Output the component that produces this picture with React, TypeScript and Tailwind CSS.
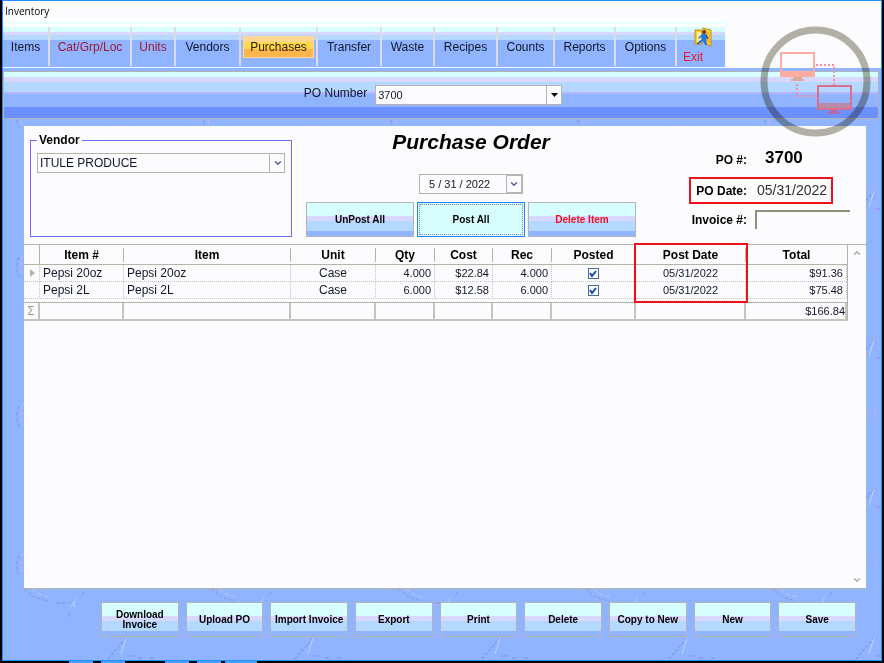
import { ChevronDown, ChevronUp } from "lucide-react";
import clsx from "clsx";

const menuItems = [
  { label: "Items", width: "w-[47px]" },
  { label: "Cat/Grp/Loc", width: "w-[82px]", red: true },
  { label: "Units", width: "w-[44px]", red: true },
  { label: "Vendors", width: "w-[65px]" },
  { label: "Purchases", width: "w-[77px]", active: true },
  { label: "Transfer", width: "w-[64px]" },
  { label: "Waste", width: "w-[53px]" },
  { label: "Recipes", width: "w-[63px]" },
  { label: "Counts", width: "w-[57px]" },
  { label: "Reports", width: "w-[61px]" },
  { label: "Options", width: "w-[61px]" },
];

const columns = [
  { label: "Item #", width: "w-[84px]" },
  { label: "Item", width: "" },
  { label: "Unit", width: "w-[85px]" },
  { label: "Qty", width: "w-[59px]" },
  { label: "Cost", width: "w-[58px]" },
  { label: "Rec", width: "w-[59px]" },
  { label: "Posted", width: "w-[84px]" },
  { label: "Post Date", width: "w-[110px]" },
  { label: "Total", width: "w-[101px]" },
];

const rows = [
  { item: "Pepsi 20oz", unit: "Case", qty: "4.000", cost: "$22.84", date: "05/31/2022", total: "$91.36" },
  { item: "Pepsi 2L", unit: "Case", qty: "6.000", cost: "$12.58", date: "05/31/2022", total: "$75.48" },
];

const actions = [
  "Download Invoice",
  "Upload PO",
  "Import Invoice",
  "Export",
  "Print",
  "Delete",
  "Copy to New",
  "New",
  "Save",
];

const buttonBands =
  "bg-[linear-gradient(#d8ffff_0_38%,#d8d8ff_38%_56%,#b4d8ff_56%_86%,#90b4ff_86%)]";

const Backdrop = () => (
  <svg className="pointer-events-none absolute inset-0 h-full w-full" aria-hidden="true">
    <defs>
      <pattern id="sketch" x="21" y="588" width="187" height="149" patternUnits="userSpaceOnUse">
        <g fill="none" strokeWidth="1">
          <path d="M1 0c6 7 13 10 23 12M60 3l-3 5" stroke="#8094d0" strokeDasharray="3 2" />
          <path d="M8 0c6 5 11 7 17 8M53 8l-4 6" stroke="#b9c6ff" strokeDasharray="5 2" />
          <path d="M32 14h15M45 24v5" stroke="#8094d0" strokeDasharray="4 2" />
          <path d="M47 18l5-6M49 13l2 5" stroke="#b4d8ff" />
          <path d="M84 70l18-21" stroke="#7488c0" strokeDasharray="3 2" />
          <path d="M102 49l-5 16" stroke="#c3d2ff" />
          <path d="M103 67h7" stroke="#9c86ff" />
          <path d="M114 69h4M126 69h4M90 96h3" stroke="#8094d0" />
          <path d="M182 115c-3 6-3 14 0 20" stroke="#8094d0" strokeDasharray="4 2" />
          <path d="M186 113c-3 7-3 14 0 21" stroke="#c8b4ff" strokeDasharray="5 2" />
          <path d="M96 117c-3 4-2 9 1 11M103 118v7" stroke="#b4b4e8" />
        </g>
      </pattern>
    </defs>
    <rect width="100%" height="100%" fill="url(#sketch)" />
  </svg>
);

const ExitIcon = () => (
  <svg width="19" height="20" viewBox="0 0 19 20" aria-hidden="true">
    <path d="M1 3h7v14H1z" fill="#ffc928" stroke="#c88a18" />
    <path d="M3 5h4v10H3z" fill="#fff2a8" />
    <path d="M8 1l9 2v16l-5-2V4z" fill="#ffd52e" stroke="#c88a18" />
    <path d="M13 5l3 1v10l-3-1z" fill="#ffb81c" />
    <circle cx="10" cy="5" r="2" fill="#6b3d1d" />
    <path d="M8 7l4 0 2 4-2 1 1 6-2 0-2-4-4 3-1-2 4-3-1-2-2 2-1-1z" fill="#2478dc" />
    <path d="M12 8l2 3-1 1M5 17l-2-1" stroke="#174a94" fill="none" />
  </svg>
);

// The ring tints whatever it crosses, the monitors keep their own colours.
const NetworkBadge = () => (
  <>
    <svg
      className="pointer-events-none absolute top-[25px] right-[10px] z-10 mix-blend-multiply"
      width="111"
      height="111"
      viewBox="0 0 111 111"
      aria-hidden="true"
    >
      <circle cx="55.500" cy="55.500" r="51.500" fill="none" stroke="#b4b1a5" strokeWidth="7" />
    </svg>
    <svg
      className="pointer-events-none absolute top-[25px] right-[10px] z-10"
      width="111"
      height="111"
      viewBox="0 0 111 111"
      aria-hidden="true"
    >
      <path fillRule="evenodd" d="M20 26h35v25H20zM22 28v17h31V28z" fill="#ffaca0" />
      <path d="M33 51h9v2h2v2H31v-2h2z" fill="#e0a898" />
      <path fillRule="evenodd" d="M57 59h35v25H57zM59 61v16h31V61z" fill="#d8708c" />
      <path d="M59 77h31v5H59z" fill="#b88ca8" />
      <path d="M70 84h8v2h2v2H68v-2h2z" fill="#b46ca8" />
      <g stroke="#f4909c" strokeWidth="2" strokeDasharray="2 2" fill="none">
        <path d="M56 39h18v20" />
        <path d="M37 58v12h19" />
      </g>
    </svg>
  </>
);

const MenuBar = () => (
  <nav className="flex h-[46px] w-fit border-t-2 border-r border-b border-[#e8ffff] bg-[linear-gradient(#ffffff_0_3px,#d8ffff_3px_8px,#d8d8ff_8px_11px,#b4d8ff_11px_16px,#90b4ff_16px)] pt-[3px] pb-px">
    {menuItems.map(({ label, width, red, active }) => (
      <div key={label} className={clsx("flex items-center justify-center border-r-2 border-[#dcdce4]", width)}>
        <button
          type="button"
          className={clsx(
            "whitespace-nowrap",
            red && "text-[#a01832]",
            active &&
              "h-[22px] border border-[#ffd8a0] bg-[linear-gradient(#ffd890_0_25%,#ffd84c_25%_62%,#ffb44c_62%)] px-[6px] text-[#302000]"
          )}
        >
          {label}
        </button>
      </div>
    ))}
    <button type="button" className="flex w-12 flex-col items-end pr-3 text-[#e8142c]">
      <ExitIcon />
      <span className="w-full pt-1 pl-[6px] text-left leading-3">Exit</span>
    </button>
  </nav>
);

const OrderGrid = () => (
  <div className="flex grow border-t border-[#b4b4b4]">
    <div className="min-w-0 grow">
      <table className="w-full table-fixed border-separate border-spacing-0 border-r border-[#b4b4a8]">
        <thead>
          <tr className="h-5">
            <th className="w-4 border-r border-b border-[#b4b4a8]" aria-label="Row marker"></th>
            {columns.map(({ label, width }, index) => (
              <th key={label} className={clsx("relative border-b border-[#b4b4a8] p-0", width)}>
                <span
                  className={clsx(
                    "block h-[14px] leading-[14px] text-black",
                    index < columns.length - 1 && "border-r border-[#b4b4a8]"
                  )}
                >
                  {label}
                </span>
                {label === "Post Date" && (
                  <span className="absolute -top-[2px] -right-[2px] -left-[2px] z-10 h-[60px] border-2 border-[#f0101c]" />
                )}
              </th>
            ))}
          </tr>
        </thead>
        <tbody className="leading-[14px] [&_td]:h-[17px] [&_td]:border-r [&_td]:border-b [&_td]:border-dotted [&_td]:border-[#c4c4c4] [&_td]:px-[3px] [&_td]:py-0">
          {rows.map((row, index) => (
            <tr key={row.item}>
              <td>
                {index === 0 && (
                  <svg width="5" height="8" viewBox="0 0 5 8" className="ml-[3px]" aria-hidden="true">
                    <path d="M0 0l5 4-5 4z" fill="#b4b4a8" />
                  </svg>
                )}
              </td>
              <td>{row.item}</td>
              <td>{row.item}</td>
              <td className="text-center">{row.unit}</td>
              <td className="text-right text-[11px]">{row.qty}</td>
              <td className="text-right text-[11px]">{row.cost}</td>
              <td className="text-right text-[11px]">{row.qty}</td>
              <td>
                <div className="relative mx-auto size-[11px]">
                  <input
                    type="checkbox"
                    defaultChecked
                    aria-label={`${row.item} posted`}
                    className="peer block size-[11px] appearance-none border border-[#4868a0] bg-white"
                  />
                  <svg
                    className="pointer-events-none absolute inset-0 hidden peer-checked:block"
                    width="11"
                    height="11"
                    viewBox="0 0 11 11"
                    aria-hidden="true"
                  >
                    <path d="M2 5l2 3 4-5" fill="none" stroke="#1848b4" strokeWidth="2" />
                  </svg>
                </div>
              </td>
              <td className="text-center text-[11px]">{row.date}</td>
              <td className="text-right text-[11px]">{row.total}</td>
            </tr>
          ))}
        </tbody>
        <tfoot className="leading-4">
          <tr>
            <td colSpan={10} className="h-1 border-b border-[#b4b4a8] p-0"></td>
          </tr>
          <tr className="[&_td]:h-[18px] [&_td]:border-r-2 [&_td]:border-b-2 [&_td]:border-[#c4c4bc] [&_td]:p-0">
            <td className="text-center text-[#a0a090]">Σ</td>
            {columns.map(({ label }) => (
              <td key={label} className="text-right text-[11px]">
                {label === "Total" && "$166.84"}
              </td>
            ))}
          </tr>
        </tfoot>
      </table>
    </div>
    <div className="flex w-[18px] shrink-0 flex-col items-center justify-between py-[3px] text-[#a8a89c]">
      <ChevronUp size={10} strokeWidth={3} />
      <ChevronDown size={10} strokeWidth={3} />
    </div>
  </div>
);

const App = () => {
  return (
    <div className="flex min-h-screen flex-col bg-black px-[2px] font-['Liberation_Sans',Arial,sans-serif] text-[12px] text-[#101828]">
      <div className="relative flex grow flex-col border border-[#1e90ff] bg-[#90b4ff]">
        <Backdrop />
        <NetworkBadge />

        <header className="relative bg-[#fcfcff]">
          <h1 className="h-[21px] pl-[2px] font-['Open_Sans',sans-serif] text-[10px] leading-[21px] text-black">
            Inventory
          </h1>
          <MenuBar />
        </header>

        <div className="relative mt-[3px] mr-[2px] flex h-12 items-center justify-center gap-2 border border-[#b4b4b4] bg-[linear-gradient(#d8ffff_0_5px,#d8d8ff_5px_10px,#b4d8ff_10px_20px,#b4b4ff_20px_22px,#90b4ff_22px_35px,#6c90ff_35px)] pr-4">
          <label htmlFor="po-number" className="pb-1">
            PO Number
          </label>
          <div className="relative">
            <select
              id="po-number"
              className="block h-5 w-[187px] appearance-none border border-[#b4b4b4] bg-[#fcfcff] pl-[2px] text-[11px]"
            >
              <option>3700</option>
            </select>
            <span className="pointer-events-none absolute inset-y-0 right-0 flex w-4 items-center justify-center border-l border-[#b4b4b4]">
              <svg width="7" height="4" viewBox="0 0 7 4" aria-hidden="true">
                <path d="M0 0h7L3.500 4z" fill="#000" />
              </svg>
            </span>
          </div>
        </div>

        <main className="relative mt-[7px] mr-[15px] ml-[21px] flex grow flex-col border-b border-[#b4b4b4] bg-[#fcfcff]">
          <div className="flex h-[118px] pl-[6px]">
            <fieldset className="mt-2 h-[103px] w-[262px] border border-[#6c6cff] px-[6px]">
              <legend className="px-[2px] leading-3 font-bold text-black">Vendor</legend>
              <div className="relative mt-[7px]">
                <select
                  aria-label="Vendor"
                  className="block h-5 w-full appearance-none border border-[#b4b4a8] bg-[#fcfcff] pl-[2px]"
                >
                  <option>ITULE PRODUCE</option>
                </select>
                <span className="pointer-events-none absolute inset-y-0 right-0 flex w-4 items-center justify-center border-l border-[#b4b4a8] text-[#4a5a90]">
                  <ChevronDown size={10} strokeWidth={3} />
                </span>
              </div>
            </fieldset>

            <div className="ml-[14px] flex flex-col items-center">
              <h2 className="mt-1 text-[21px] leading-6 font-bold text-black italic">Purchase Order</h2>
              <div className="mt-5 flex h-5 w-[104px] border border-[#b4b4a8]">
                <input
                  aria-label="Post date"
                  defaultValue="5 / 31 / 2022"
                  className="min-w-0 grow bg-transparent pl-[9px] text-[11px]"
                />
                <button
                  type="button"
                  aria-label="Open calendar"
                  className="flex w-4 shrink-0 items-center justify-center border border-[#b4b4c4] text-[#4a5a90]"
                >
                  <ChevronDown size={10} strokeWidth={3} />
                </button>
              </div>
              <div className="mt-2 flex gap-[3px] text-[10px] font-bold text-black">
                <button type="button" className={clsx("h-[35px] w-[108px] border border-[#b4b4b4]", buttonBands)}>
                  UnPost All
                </button>
                <button type="button" className="h-[35px] w-[108px] border border-[#1e80ff] bg-[#d8ffff] p-px">
                  <span className="flex h-full items-center justify-center border border-dotted border-[#808890]">
                    Post All
                  </span>
                </button>
                <button
                  type="button"
                  className={clsx("h-[35px] w-[108px] border border-[#b4b4b4] text-[#f0101c]", buttonBands)}
                >
                  Delete Item
                </button>
              </div>
            </div>

            <div className="mr-[15px] ml-auto flex w-[162px] flex-col pt-5 text-black">
              <div className="flex h-6 items-center">
                <span className="w-[58px] pt-1 text-right font-bold">PO #:</span>
                <span className="pl-[18px] text-[17px] font-bold">3700</span>
              </div>
              <div className="mt-[7px] flex h-[27px] w-[144px] items-center border-2 border-[#f0101c]">
                <span className="w-[56px] text-right font-bold">PO Date:</span>
                <span className="pl-[10px] text-[14px] text-[#303030]">05/31/2022</span>
              </div>
              <div className="mt-[6px] flex items-center">
                <label htmlFor="invoice" className="w-[58px] text-right font-bold whitespace-nowrap">
                  Invoice #:
                </label>
                <input
                  id="invoice"
                  className="ml-2 h-[19px] w-[95px] border-t-2 border-l-2 border-[#90907c] bg-[#fcfcff] px-1"
                />
              </div>
            </div>
          </div>

          <OrderGrid />
        </main>

        <footer className="relative mt-[13px] mr-[25px] mb-[23px] ml-[98px] grid grid-cols-9 gap-[7px] text-[10px] leading-[10px] font-bold text-black">
          {actions.map((action) => (
            <button
              key={action}
              type="button"
              className={clsx("h-[35px] border border-[#b4b4b4]", action === "Download Invoice" && "px-3", buttonBands)}
            >
              {action}
            </button>
          ))}
        </footer>
      </div>
      <div className="flex h-[2px] pl-[67px]">
        <span className="w-6 bg-[#48a0ff]" />
        <span className="ml-2 w-6 bg-[#48a0ff]" />
        <span className="ml-10 w-6 bg-[#48a0ff]" />
        <span className="ml-2 w-6 bg-[#48a0ff]" />
        <span className="ml-1 w-8 bg-[#48a0ff]" />
      </div>
    </div>
  );
};

export default App;
